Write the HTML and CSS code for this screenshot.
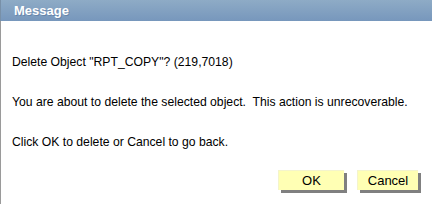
FILE: index.html
```html
<!DOCTYPE html>
<html lang="en">
<head>
    <meta charset="UTF-8">
    <title>Message</title>
    <link rel="stylesheet" href="styles.css">
</head>
<body>
    <div class="dialog">
        <!-- Title bar -->
        <div class="titlebar">Message</div>

        <!-- Message text -->
        <div class="body">
            <p class="msg">Delete Object "RPT_COPY"? (219,7018)</p>
            <p class="msg">You are about to delete the selected object.&nbsp; This action is unrecoverable.</p>
            <p class="msg">Click OK to delete or Cancel to go back.</p>

            <div class="buttons">
                <button class="btn ok-btn">OK</button>
                <button class="btn cancel-btn">Cancel</button>
            </div>
        </div>
    </div>
</body>
</html>
```

FILE: styles.css
```css
* {
    margin: 0;
    padding: 0;
    box-sizing: border-box;
}

body, html {
    height: 100%;
    background: #ffffff;
    font-family: "Liberation Sans", Arial, sans-serif;
    overflow: hidden;
}

.dialog {
    height: 100%;
    border-left: 1px solid #9a9a9a;
}

.titlebar {
    height: 21px;
    padding-left: 13px;
    line-height: 21px;
    font-size: 13px;
    font-weight: bold;
    color: #ffffff;
    text-shadow: 1px 1px 0 rgba(60, 90, 130, 0.35);
    background: linear-gradient(#8eabc6, #7797bc);
    margin-left: -1px;
    border-left: 1px solid #7890a8;
}

.body {
    padding: 34px 0 0 11px;
}

.msg {
    font-size: 12.2px;
    line-height: 14px;
    color: #000000;
    margin-bottom: 26px;
}

.buttons {
    display: flex;
    justify-content: flex-end;
    gap: 13px;
    margin-top: -5px;
    padding-right: 14px;
}

.btn {
    height: 20px;
    font-family: "Liberation Sans", Arial, sans-serif;
    font-size: 13px;
    color: #000000;
    background-color: #ffffb4;
    border: none;
    border-top: 1px solid #f4f4cc;
    border-left: 1px solid #f4f4cc;
    box-shadow: 3px 3px 0 #808080;
    cursor: pointer;
}

.ok-btn {
    width: 66px;
}

.cancel-btn {
    width: 61px;
}
```
